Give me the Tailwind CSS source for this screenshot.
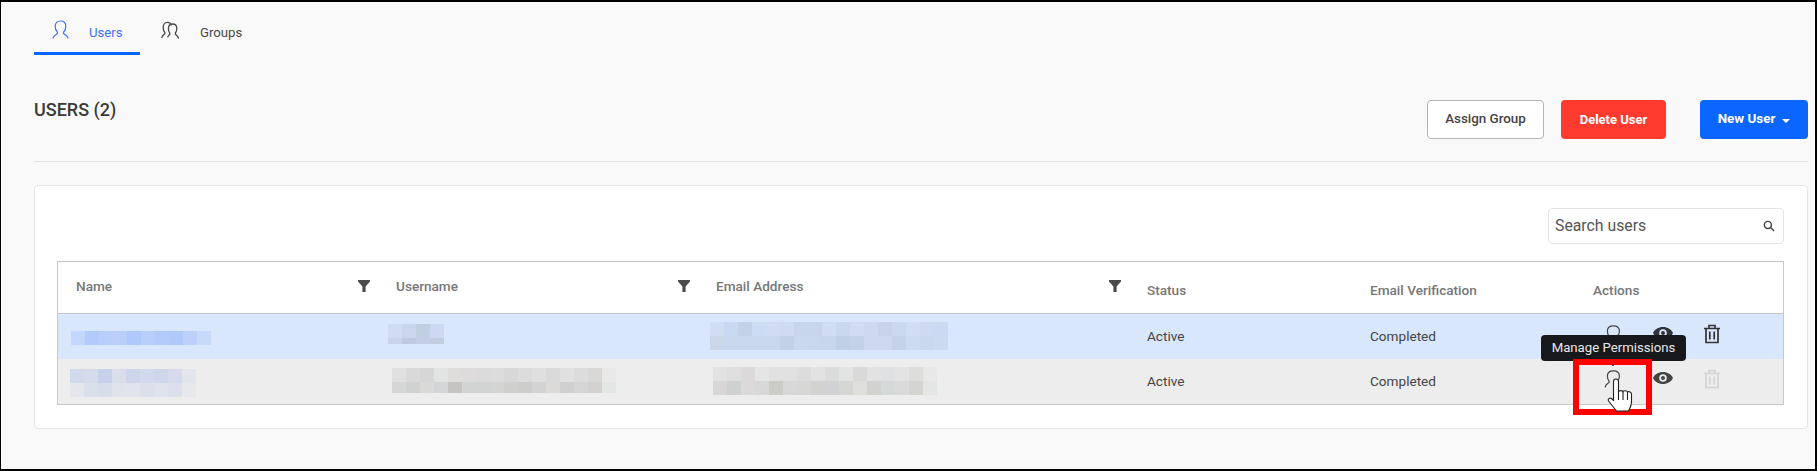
<!DOCTYPE html>
<html lang="en">
  <head>
    <meta charset="UTF-8" />
    <title>Users</title>
    <script src="https://cdn.jsdelivr.net/npm/@tailwindcss/browser@4"></script>
  </head>
  <body class="font-['Roboto',sans-serif] text-[13.6px] text-[#444]">
    <div class="relative h-[471px] w-[1817px] overflow-hidden border-2 border-black border-l-[1px] bg-[#f9f9f9] pl-[33px] pr-[7px]">
      <!-- tabs -->
      <div class="flex h-[53px] text-[13.2px]">
        <div class="flex h-[53px] w-[106px] items-start gap-[20px] border-b-[3px] border-[#0a66ff] pl-[18px] pt-[18px] text-[#3f6ff5]">
          <svg class="h-[20px] w-[17px]" viewBox="0 0 17 20" fill="none" stroke="currentColor" stroke-width="1.2" stroke-linecap="round">
            <path d="M5.4 12.2C3.8 10.6 3.2 8.6 3.2 6.3 3.2 3 5.3 1 8.5 1s5.3 2 5.3 5.3c0 2.3-.6 4.3-2.2 5.9v1.4c1.4 1.2 3.4 1.4 4.4 4.4M5.4 12.2v1.4C4 14.8 2 15 1 18"/>
          </svg>
          <span class="mt-[3px] leading-[20px]">Users</span>
        </div>
        <div class="flex items-start gap-[20px] pl-[21px] pt-[19px] text-[#4a4a4a]">
          <svg class="h-[20px] w-[19px]" viewBox="0 0 19 20" fill="none" stroke="currentColor" stroke-width="1.3" stroke-linecap="round">
            <path d="M3.8 11.4C2.6 10 2.2 8.3 2.2 6.4 2.2 3.400 4 1.400 6.600 1.400c1.800 0 3.100.9 3.700 2.500M3.800 11.400v1.400C2.600 14 1.400 14 .8 16.600M8.800 12c-1-1.300-1.400-2.800-1.400-4.400 0-2.800 1.700-4.600 4.200-4.600s4.200 1.800 4.200 4.600c0 1.700-.4 3.100-1.400 4.400v1.300c1 1 2.400 1.400 3 3.700M8.800 12v1.300c-.6.6-1.300 1.200-2 2.600"/>
          </svg>
          <span class="mt-[2px] leading-[20px]">Groups</span>
        </div>
      </div>

      <!-- title and buttons -->
      <div class="mt-[45px] flex h-[39px] items-start">
        <h1 class="mt-[-1px] text-[18px] font-medium leading-[22px] text-[#3a3a3a]">USERS (2)</h1>
        <button class="ml-auto h-[39px] w-[117px] rounded-[4px] border border-[#b5b5b5] bg-white text-[13.4px] font-medium text-[#444]">Assign Group</button>
        <button class="ml-[17px] h-[39px] w-[105px] rounded-[4px] bg-[#ff3b30] text-[13px] font-bold text-white">Delete User</button>
        <button class="ml-[34px] flex h-[39px] w-[108px] items-center justify-center gap-[7px] rounded-[4px] bg-[#0a66ff] text-[13.4px] font-bold text-white">
          New User
          <span class="mt-[2px] h-0 w-0 border-x-[4px] border-t-[4px] border-x-transparent border-t-white"></span>
        </button>
      </div>
      <div class="mt-[22px] h-px bg-[#e3e3e3]"></div>

      <!-- card -->
      <div class="mt-[23px] h-[244px] rounded-[4px] border border-[#e5e5e5] bg-white px-[22px] pt-[22px]">
        <div class="flex justify-end pr-px">
          <div class="flex h-[36px] w-[236px] items-center justify-between rounded-[4px] border border-[#e5e5e5] pl-[6px] pr-[8px] text-[15.8px] text-[#555]">
            Search users
            <svg class="h-[12px] w-[12px]" viewBox="0 0 13 13" fill="none" stroke="#444" stroke-width="1.6"><circle cx="5.3" cy="5.3" r="3.8"/><path d="M8.2 8.2 12 12"/></svg>
          </div>
        </div>

        <div class="mt-[17px] w-[1727px] border border-[#c8c8c8]">
          <!-- header -->
          <div class="grid h-[52px] grid-cols-[320px_320px_430px_223px_223px_1fr] border-b border-[#c8c8c8] font-medium text-[#777]">
            <div class="flex items-center justify-between pb-[2px] pl-[18px] pr-[7px]">Name
              <svg class="mb-[2px] h-[14px] w-[14px] text-[#4a4a4a]" viewBox="0 0 14 14" fill="currentColor"><path d="M1 1h12v1.600L8.600 7.400V13H5.400V7.400L1 2.600z"/></svg>
            </div>
            <div class="flex items-center justify-between pb-[2px] pl-[18px] pr-[7px]">Username
              <svg class="mb-[2px] h-[14px] w-[14px] text-[#4a4a4a]" viewBox="0 0 14 14" fill="currentColor"><path d="M1 1h12v1.600L8.600 7.400V13H5.400V7.400L1 2.600z"/></svg>
            </div>
            <div class="flex items-center justify-between pb-[2px] pl-[18px] pr-[6px]">Email Address
              <svg class="mb-[2px] h-[14px] w-[14px] text-[#4a4a4a]" viewBox="0 0 14 14" fill="currentColor"><path d="M1 1h12v1.600L8.600 7.400V13H5.400V7.400L1 2.600z"/></svg>
            </div>
            <div class="flex items-center pl-[19px] pt-[6px]">Status</div>
            <div class="flex items-center pl-[19px] pt-[6px]">Email Verification</div>
            <div class="flex items-center pl-[19px] pt-[5px]">Actions</div>
          </div>

          <!-- row 1 -->
          <div class="grid h-[45px] grid-cols-[320px_320px_430px_223px_223px_1fr] bg-[#d9e7fd]">
            <div class="pl-[13px] pt-[17px]">
              <div class="grid grid-cols-[repeat(10,14px)] auto-rows-[14px]" data-mosaic="#c3d6fb #b3cbfb #b8cefb #bccffb #b0c9fb #b9cffb #b3cbfb #afc9fb #bcd0fa #c8daf9"></div>
            </div>
            <div class="pl-[10px] pt-[10px]">
              <div class="grid grid-cols-[repeat(4,14px)] grid-rows-[14px_6px]" data-mosaic="#d0dcef #cad6ea #c0cfe2 #cdd9f2 #c8d4e7 #bfcadf #c3d0e3 #c2cde2"></div>
            </div>
            <div class="pl-[12px] pt-[8px]">
              <div class="grid grid-cols-[repeat(17,14px)] auto-rows-[14px]" data-mosaic="#d1def2 #c9d9f1 #c3d2e6 #cddcf5 #cfdcf2 #cfdbf3 #c8d6ea #c8d6ea #cfdcf2 #c9d8ee #cfdcf2 #ccd9f1 #c7d4ea #cbd9ee #d1def2 #cddaf2 #cbd9f2 #cbd7e9 #c8d7ee #c8d7ec #c9d7ea #c9d7ea #c1d1e8 #cbd8ec #c9d7eb #c7d6ea #c1d1e5 #c3d2e6 #ccd9f0 #ccd9ef #c5d3e6 #cddaf1 #c9d8ec #cbdaf1"></div>
            </div>
            <div class="flex items-center pl-[19px]">Active</div>
            <div class="flex items-center pl-[19px]">Completed</div>
            <div class="relative"></div>
          </div>

          <!-- row 2 -->
          <div class="grid h-[45px] grid-cols-[320px_320px_430px_223px_223px_1fr] bg-[#ededed]">
            <div class="pl-[12px] pt-[10px]">
              <div class="grid grid-cols-[repeat(9,14px)] auto-rows-[14px]" data-mosaic="#d2d9ec #d5dbeb #c8d1ec #dadeeb #ccd5ec #d3d9ec #cdd6eb #d6dbeb #e2e5ec #e4e6ec #dbdfec #d8ddeb #e0e3ec #e1e4ec #dce0ec #dfe3ec #dce0ec #e6e8ec"></div>
            </div>
            <div class="pl-[14px] pt-[9px]">
              <div class="grid grid-cols-[repeat(16,14px)] grid-rows-[14px_11px]" data-mosaic="#e0e0e0 #d9d9d9 #d6d6d6 #e2e4e3 #dfdcdc #dddbdb #dbdbdb #dddcdc #d8d8d8 #dcdcdc #dfdfdf #dbdada #e0e0e0 #dcdcdc #d9d8d6 #e8e9e8 #d6d5d5 #d0d2d1 #dad9d7 #d3d5d6 #c6c4c2 #d2d4d4 #d2d3d3 #d4d4d2 #cfcfcd #cdcdcc #d3d3d3 #dbdad8 #d0d0d0 #d4d6d6 #d3d2d1 #e4e6e5"></div>
            </div>
            <div class="pl-[15px] pt-[8px]">
              <div class="grid grid-cols-[repeat(16,14px)] auto-rows-[14px]" data-mosaic="#e2e2e2 #dedede #dbd9d9 #e4e6e5 #e1e1e1 #e1e1e1 #dcdcdc #e2e2e2 #d9dcda #e3e3e3 #d9d9d5 #e2e2e2 #dfe1e2 #e3e3e3 #ddddda #e7e8e7 #d8d6d6 #cfd1d0 #dbd9d9 #d8d8d8 #cbcbc8 #d8d8d8 #d7d7d5 #d2d2d0 #d0d2d3 #d5d5d3 #dfdfda #d2d2d0 #d5dad9 #dadada #d5d4d1 #e4e6e5"></div>
            </div>
            <div class="flex items-center pl-[19px]">Active</div>
            <div class="flex items-center pl-[19px]">Completed</div>
            <div></div>
          </div>
        </div>
      </div>

      <!-- action icons, tooltip and callout lie over the table rows -->
      <svg class="absolute left-[1600px] top-[321px] h-[24px] w-[24px] text-[#444]" viewBox="0 0 24 24" fill="none" stroke="currentColor" stroke-width="1.2" stroke-linecap="round"><path d="M8 13C6.800 11.600 6.400 9.800 6.400 8c0-3.200 2.400-5.200 6-5.200s6 2 6 5.200c0 1.600-.3 2.900-1 4M8 13v1.600C6.700 15.700 5 16 4.200 19"/><circle cx="17" cy="15.500" r="3" stroke-dasharray="1.500 1" stroke-width="1.600"/></svg>
      <svg class="absolute left-[1651px] top-[324px] h-[14px] w-[22px] text-[#2f3338]" viewBox="0 0 22 14" fill="currentColor"><path fill-rule="evenodd" d="M11 1c4.600 0 8.400 2.500 10 6-1.600 3.500-5.400 6-10 6S2.600 10.500 1 7c1.600-3.500 5.400-6 10-6zm0 2.200a3.800 3.800 0 1 0 0 7.600 3.800 3.800 0 0 0 0-7.600zm0 1.800a2 2 0 1 1 0 4 2 2 0 0 1 0-4z"/></svg>
      <svg class="absolute left-[1702px] top-[322px] h-[20px] w-[18px] text-[#333]" viewBox="0 0 18 20" fill="none" stroke="currentColor" stroke-width="1.700"><path d="M1 4.500h16M6 4.500V1.500h6v3M3 4.500V18.500h12V4.500M6.800 7.500v8M11.200 7.500v8"/></svg>

      <svg class="absolute left-[1600px] top-[366px] h-[24px] w-[24px] text-[#444]" viewBox="0 0 24 24" fill="none" stroke="currentColor" stroke-width="1.200" stroke-linecap="round"><path d="M8 13C6.800 11.600 6.400 9.800 6.400 8c0-3.200 2.400-5.200 6-5.200s6 2 6 5.200c0 1.600-.3 2.900-1 4M8 13v1.600C6.700 15.700 5 16 4.200 19"/></svg>
      <svg class="absolute left-[1651px] top-[369px] h-[14px] w-[22px] text-[#444]" viewBox="0 0 22 14" fill="currentColor"><path fill-rule="evenodd" d="M11 1c4.600 0 8.400 2.500 10 6-1.600 3.500-5.400 6-10 6S2.600 10.500 1 7c1.600-3.500 5.400-6 10-6zm0 2.200a3.800 3.800 0 1 0 0 7.600 3.800 3.800 0 0 0 0-7.600zm0 1.800a2 2 0 1 1 0 4 2 2 0 0 1 0-4z"/></svg>
      <svg class="absolute left-[1702px] top-[367px] h-[20px] w-[18px] text-[#d4d4d4]" viewBox="0 0 18 20" fill="none" stroke="currentColor" stroke-width="1.700"><path d="M1 4.500h16M6 4.500V1.500h6v3M3 4.500V18.500h12V4.500M6.800 7.500v8M11.200 7.500v8"/></svg>

      <div class="absolute left-[1540px] top-[333px] flex h-[26px] w-[145px] items-center justify-center rounded-[4px] bg-[#17181c] text-[13.2px] text-[#e8e8e8]">Manage Permissions</div>
      <div class="absolute left-[1572px] top-[357px] h-[56px] w-[79px] border-[6px] border-[#ff0000]"></div>
      <div class="absolute left-[1611px] top-[362px] h-[2px] w-[2px] rounded-full bg-[#222]"></div>
      <svg class="absolute left-[1606px] top-[375px] h-[36px] w-[30px]" viewBox="0 0 30 36" fill="#fff" stroke="#222" stroke-width="1.100" stroke-linejoin="round"><path d="M6.500 4.500a2.500 2.500 0 0 1 5 0V15c0-1.800 4.500-1.800 4.500 0 0-1.800 4.500-1.800 4.500.5 0-1.500 4-1 4 1.500v8c0 4-1.500 6-3 9H9.500L1.500 24c-1-2 1-3.500 3-2.500l2 2z"/><path d="M11.500 14v9M16 15v8M20.500 16v7" fill="none"/></svg>
    </div>

    <script>
      // blurred-out values: paint each mosaic cell from its colour list
      document.querySelectorAll("[data-mosaic]").forEach(function (el) {
        el.dataset.mosaic.split(" ").forEach(function (colour) {
          const cell = document.createElement("span");
          cell.style.background = colour;
          el.appendChild(cell);
        });
      });
    </script>
  </body>
</html>
